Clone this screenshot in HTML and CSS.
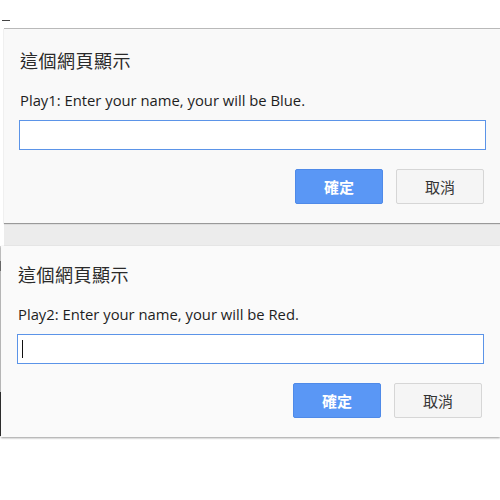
FILE: index.html
```html
<!DOCTYPE html>
<html lang="zh-Hant">
<head>
<meta charset="utf-8">
<title>prompt</title>
<link rel="stylesheet" href="styles.css">
</head>
<body>
  <div class="top"><span class="dash"></span></div>

  <div class="shot shot-one">
    <div class="dialog dialog-one">
      <div class="title">這個網頁顯示</div>
      <div class="msg">Play1: Enter your name, your will be Blue.</div>
      <div class="field"></div>
      <div class="actions">
        <div class="btn btn-ok">確定</div>
        <div class="btn btn-cancel">取消</div>
      </div>
    </div>
    <div class="band"></div>
  </div>

  <div class="shot shot-two">
    <div class="edge"></div>
    <div class="dialog dialog-two">
      <div class="title">這個網頁顯示</div>
      <div class="msg">Play2: Enter your name, your will be Red.</div>
      <div class="field"><span class="caret"></span></div>
      <div class="actions">
        <div class="btn btn-ok">確定</div>
        <div class="btn btn-cancel">取消</div>
      </div>
    </div>
  </div>
</body>
</html>
```

FILE: styles.css
```css
html, body {
  margin: 0;
  padding: 0;
  background: #ffffff;
}

body {
  width: 500px;
  height: 500px;
  overflow: hidden;
  font-family: "Segoe UI", "Open Sans", "Noto Sans", "Noto Sans CJK TC", sans-serif;
  color: #333333;
}

.top {
  height: 28px;
  display: flex;
}

.dash {
  display: block;
  width: 8px;
  height: 1px;
  margin: 20px 0 0 2px;
  background: #444444;
}

.shot-one {
  margin-left: 4px;
}

.dialog {
  background: #f9f9f9;
  box-sizing: border-box;
  display: flex;
  flex-direction: column;
}

.dialog-one {
  border-top: 1px solid #b9b9b9;
  height: 195px;
  padding: 19px 14px 0 15px;
  box-shadow: 0 1px 1px rgba(0, 0, 0, 0.35);
  position: relative;
  z-index: 1;
}

.band {
  height: 23px;
  background: #ececec;
}

.shot-two {
  display: flex;
  height: 192px;
}

.edge {
  width: 1px;
  background: linear-gradient(to bottom,
    #d8d8d8 0px, #d8d8d8 15px,
    #777777 15px, #777777 25px,
    #d0d0d0 25px, #d0d0d0 146px,
    #333333 146px, #333333 190px,
    transparent 190px);
}

.dialog-two {
  flex: 1;
  height: 191px;
  padding: 16px 16px 0 16px;
  background: #fafafa;
  box-shadow: 0 1px 2px rgba(0, 0, 0, 0.4);
}

.title {
  font-family: "Noto Sans CJK TC", "Noto Sans CJK SC", sans-serif;
  font-size: 18px;
  letter-spacing: 0.5px;
  font-weight: 400;
  line-height: 24px;
  color: #2a2a2a;
  padding-left: 1px;
}

.msg {
  margin-top: 18px;
  font-size: 14.8px;
  line-height: 20px;
  color: #1e1e1e;
  padding-left: 1px;
}

.field {
  margin-top: 10px;
  height: 30px;
  box-sizing: border-box;
  border: 1px solid #5b94e8;
  background: #ffffff;
  display: flex;
  align-items: center;
  padding-left: 4px;
}

.caret {
  display: block;
  width: 1px;
  height: 18px;
  background: #111111;
}

.actions {
  margin-top: 19px;
  display: flex;
  justify-content: flex-end;
  gap: 13px;
  padding-right: 2px;
}

.btn {
  width: 88px;
  height: 35px;
  box-sizing: border-box;
  border-radius: 2px;
  display: flex;
  align-items: center;
  justify-content: center;
  font-family: "Noto Sans CJK TC", "Noto Sans CJK SC", sans-serif;
  font-size: 15px;
}

.btn-ok {
  background: #5a97f5;
  border: 1px solid #4f8ae8;
  color: #ffffff;
  font-weight: bold;
}

.btn-cancel {
  background: #f5f5f5;
  border: 1px solid #d6d6d6;
  color: #333333;
}
```
